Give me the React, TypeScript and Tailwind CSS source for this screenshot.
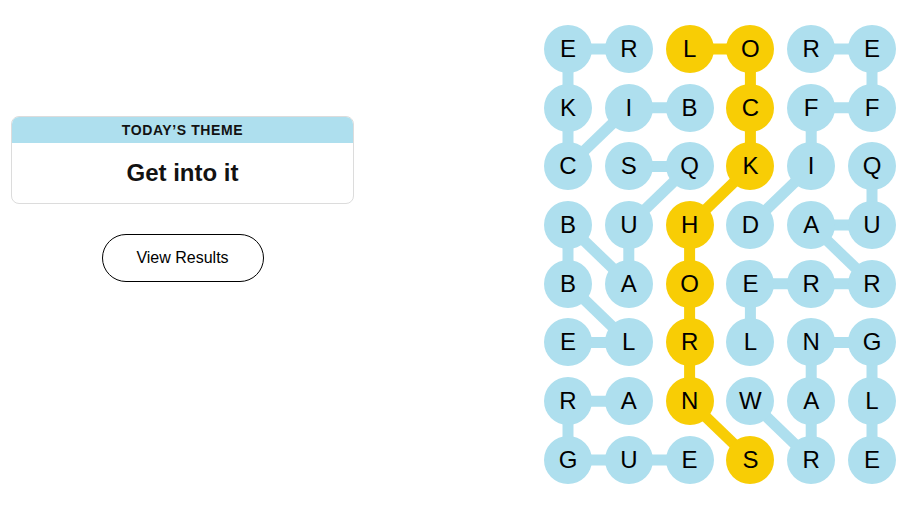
import React from "react";

const GRID = [
  "ERLORE",
  "KIBCFF",
  "CSQKIQ",
  "BUHDAU",
  "BAOERR",
  "ELRLNG",
  "RANWAL",
  "GUESRE",
];

const YELLOW_CELLS = new Set([
  "0,2", "0,3", "1,3", "2,3", "3,2", "4,2", "5,2", "6,2", "7,3",
]);

type Seg = [number, number, number, number];

const BLUE: Seg[] = [
  [0, 0, 0, 1],
  [0, 0, 1, 0],
  [1, 0, 2, 0],
  [1, 1, 1, 2],
  [1, 1, 2, 0],
  [0, 4, 0, 5],
  [0, 5, 1, 5],
  [1, 4, 1, 5],
  [1, 4, 2, 4],
  [2, 4, 3, 3],
  [2, 1, 2, 2],
  [2, 2, 3, 1],
  [3, 1, 4, 1],
  [3, 0, 4, 1],
  [3, 0, 4, 0],
  [4, 0, 5, 1],
  [5, 0, 5, 1],
  [2, 5, 3, 5],
  [3, 4, 3, 5],
  [3, 4, 4, 5],
  [4, 3, 4, 4],
  [4, 4, 4, 5],
  [4, 3, 5, 3],
  [5, 4, 5, 5],
  [5, 4, 6, 4],
  [5, 5, 6, 5],
  [6, 5, 7, 5],
  [6, 0, 6, 1],
  [6, 0, 7, 0],
  [7, 0, 7, 1],
  [7, 1, 7, 2],
  [6, 3, 7, 4],
  [6, 4, 7, 4],
];

const YELLOW: Seg[] = [
  [0, 2, 0, 3],
  [0, 3, 1, 3],
  [1, 3, 2, 3],
  [2, 3, 3, 2],
  [3, 2, 4, 2],
  [4, 2, 5, 2],
  [5, 2, 6, 2],
  [6, 2, 7, 3],
];

const CX = (c: number) => 24 + c * 60.8;
const CY = (r: number) => 24 + r * 58.7;

function Board() {
  return (
    <div className="relative w-[352px] h-[459px]">
      <svg
        className="absolute inset-0"
        width={352}
        height={459}
        viewBox="0 0 352 459"
      >
        {BLUE.map(([r1, c1, r2, c2], i) => (
          <line
            key={"b" + i}
            x1={CX(c1)}
            y1={CY(r1)}
            x2={CX(c2)}
            y2={CY(r2)}
            stroke="#aedfee"
            strokeWidth={11}
          />
        ))}
        {YELLOW.map(([r1, c1, r2, c2], i) => (
          <line
            key={"y" + i}
            x1={CX(c1)}
            y1={CY(r1)}
            x2={CX(c2)}
            y2={CY(r2)}
            stroke="#f8cd05"
            strokeWidth={11}
          />
        ))}
      </svg>
      <div className="relative grid grid-cols-[repeat(6,48px)] gap-x-[12.8px] gap-y-[10.7px]">
        {GRID.flatMap((row, r) =>
          row.split("").map((ch, c) => {
            const yellow = YELLOW_CELLS.has(`${r},${c}`);
            return (
              <div
                key={`${r}-${c}`}
                className={
                  yellow
                    ? "w-[48px] h-[48px] rounded-full bg-[#f8cd05] flex items-center justify-center text-[24px] text-black leading-none"
                    : "w-[48px] h-[48px] rounded-full bg-[#aedfee] flex items-center justify-center text-[24px] text-black leading-none"
                }
              >
                {ch}
              </div>
            );
          })
        )}
      </div>
    </div>
  );
}

export default function App() {
  return (
    <div
      className="w-[906px] h-[509px] bg-white flex overflow-hidden"
      style={{ fontFamily: '"Liberation Sans", Arial, sans-serif' }}
    >
      <div className="w-[544px] shrink-0 pl-[11px] pt-[116px]">
        <div className="w-[343px] rounded-[8px] border border-[#dcdcdc] overflow-hidden">
          <div className="h-[26px] bg-[#aedfee] flex items-center justify-center text-[14px] font-bold tracking-[0.6px] text-[#121212]">
            TODAY’S THEME
          </div>
          <div className="h-[60px] flex items-center justify-center text-[24px] font-bold text-[#121212]">
            Get into it
          </div>
        </div>
        <div className="w-[343px] flex justify-center mt-[30px]">
          <button className="w-[162px] h-[48px] rounded-full border border-black text-[16px] text-black bg-white">
            View Results
          </button>
        </div>
      </div>
      <div className="pt-[25px]">
        <Board />
      </div>
    </div>
  );
}
